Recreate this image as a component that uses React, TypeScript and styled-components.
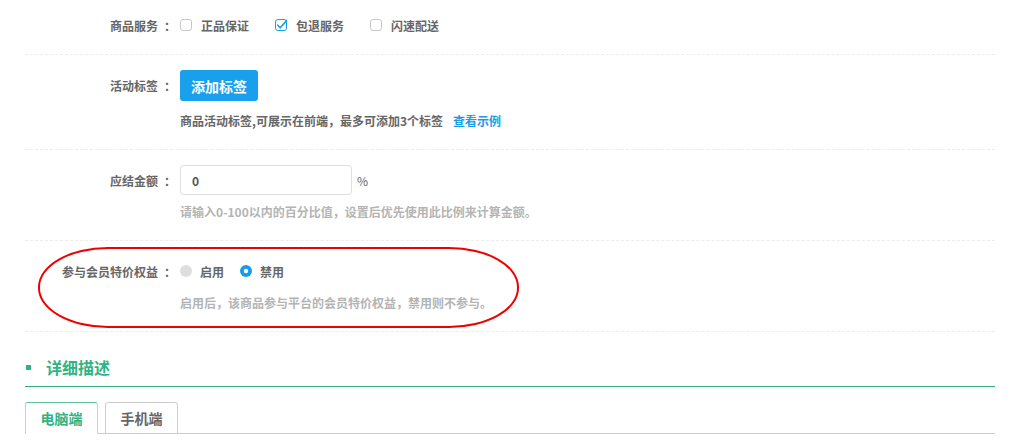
import styled, { createGlobalStyle } from "styled-components";

const GlobalStyle = createGlobalStyle`
    body {
        margin: 0;
        background: #ffffff;
        font-family: "Noto Sans CJK SC", "Liberation Sans", sans-serif;
        font-size: 12px;
        color: #666666;
    }
`

type CheckProps = {
    label: string
    checked?: boolean
}

const Check = (props: CheckProps) => {
    return (
        <Option>
            <svg width="13" height="13" viewBox="0 0 13 13">
                <rect x="0.5" y="0.5" width="11" height="11" rx="2.5" fill="#fff"
                      stroke={props.checked ? "#1a9be6" : "#c8c8c8"}/>
                {props.checked && (
                    <path d="M2.8 6.2 L5.2 8.8 L11.6 1.6" fill="none" stroke="#1a9be6"
                          strokeWidth="1.6" strokeLinecap="round" strokeLinejoin="round"/>
                )}
            </svg>
            {props.label}
        </Option>
    );
};

const Radio = (props: CheckProps) => {
    return (
        <Option>
            <svg width="12" height="12" viewBox="0 0 12 12">
                {props.checked ? (
                    <>
                        <circle cx="6" cy="6" r="6" fill="#1a9be6"/>
                        <circle cx="6" cy="6" r="2.2" fill="#fff"/>
                    </>
                ) : (
                    <circle cx="6" cy="6" r="6" fill="#dedede"/>
                )}
            </svg>
            {props.label}
        </Option>
    );
};

const FieldLabel = (props: { text: string }) => {
    return (
        <Label>
            {props.text}
            <Colon>：</Colon>
        </Label>
    );
};

export const App = () => {
    return (
        <Page>
            <GlobalStyle/>
            <Row $compact>
                <Line>
                    <FieldLabel text="商品服务"/>
                    <Options $gap={26}>
                        <Check label="正品保证"/>
                        <Check label="包退服务" checked/>
                        <Check label="闪速配送"/>
                    </Options>
                </Line>
            </Row>

            <Row>
                <Line>
                    <FieldLabel text="活动标签"/>
                    <Button>添加标签</Button>
                </Line>
                <Help $dark>
                    商品活动标签,可展示在前端，最多可添加3个标签
                    <Link href={"#"}>查看示例</Link>
                </Help>
            </Row>

            <Row>
                <Line>
                    <FieldLabel text="应结金额"/>
                    <Input defaultValue="0"/>
                    <Unit>%</Unit>
                </Line>
                <Help>请输入0-100以内的百分比值，设置后优先使用此比例来计算金额。</Help>
            </Row>

            <Row>
                <Mark/>
                <Line>
                    <FieldLabel text="参与会员特价权益"/>
                    <Options $gap={16}>
                        <Radio label="启用"/>
                        <Radio label="禁用" checked/>
                    </Options>
                </Line>
                <Help>启用后，该商品参与平台的会员特价权益，禁用则不参与。</Help>
            </Row>

            <SectionHead>
                <Bullet/>
                <SectionTitle>详细描述</SectionTitle>
            </SectionHead>

            <Tabs>
                <Tab $active>电脑端</Tab>
                <Tab>手机端</Tab>
            </Tabs>
        </Page>
    );
};

export default App;

const Page = styled.div`
    width: 970px;
    margin-left: 25px;
`

const Row = styled.div<{ $compact?: boolean }>`
    position: relative;
    padding: ${p => p.$compact ? "10px 0 14px" : "15px 0 19px"};
    border-bottom: 1px dashed #ececec;
`

const Line = styled.div`
    display: flex;
    align-items: center;
    min-height: 30px;
`

const Label = styled.div`
    width: 145px;
    margin-right: 10px;
    text-align: right;
    font-weight: 700;
    color: #666;
    white-space: nowrap;
`

// the CJK colon sits at the left of its box, nudge it to the middle
const Colon = styled.span`
    padding-left: 6px;
    margin-right: -6px;
`

const Options = styled.div<{ $gap: number }>`
    display: flex;
    align-items: center;
    gap: ${p => p.$gap}px;
`

const Option = styled.label`
    display: flex;
    align-items: center;
    gap: 8px;
    font-weight: 700;
    color: #666;

    svg {
        display: block;
        flex-shrink: 0;
    }
`

const Button = styled.button`
    width: 78px;
    height: 31px;
    border: none;
    border-radius: 3px;
    background: #19a0ec;
    color: #fff;
    font-family: inherit;
    font-size: 14px;
    font-weight: 700;
    padding: 0;
`

const Input = styled.input`
    box-sizing: border-box;
    width: 172px;
    height: 30px;
    border: 1px solid #e0e0e0;
    border-radius: 3px;
    padding: 0 11px;
    font-family: inherit;
    font-size: 12px;
    font-weight: 700;
    color: #555;
    outline: none;
`

const Unit = styled.span`
    margin-left: 5px;
    color: #666;
`

const Help = styled.div<{ $dark?: boolean }>`
    margin: ${p => p.$dark ? "11px" : "8px"} 0 0 155px;
    line-height: 18px;
    font-weight: 700;
    color: ${p => p.$dark ? "#666" : "#b4b4b4"};
`

const Link = styled.a`
    margin-left: 10px;
    color: #1a9be6;
    text-decoration: none;
`

// hand-drawn red ring around the member pricing row
const Mark = styled.div`
    position: absolute;
    left: 13px;
    top: 6px;
    width: 477px;
    height: 77px;
    border: 2px solid #ee0000;
    border-radius: 70px / 40px;
    pointer-events: none;
`

const SectionHead = styled.div`
    display: flex;
    align-items: center;
    height: 20px;
    padding: 25px 0 9px;
    border-bottom: 1px solid #36ad7f;
`

const Bullet = styled.span`
    width: 5px;
    height: 5px;
    margin: 0 15px 0 1px;
    background: #2fb383;
`

const SectionTitle = styled.h3`
    margin: 0;
    font-size: 16px;
    font-weight: 700;
    color: #2fb383;
`

const Tabs = styled.div`
    display: flex;
    gap: 7px;
    margin-top: 15px;
    border-bottom: 1px solid #cccccc;
`

const Tab = styled.div<{ $active?: boolean }>`
    box-sizing: border-box;
    width: 73px;
    height: 32px;
    margin-bottom: -1px;
    display: flex;
    align-items: center;
    justify-content: center;
    border: 1px solid #cccccc;
    border-top-color: ${p => p.$active ? "#5fc49c" : "#cccccc"};
    border-bottom-color: ${p => p.$active ? "#ffffff" : "#cccccc"};
    border-radius: 3px 3px 0 0;
    background: #fff;
    font-size: 14px;
    font-weight: 700;
    color: ${p => p.$active ? "#2fb383" : "#666"};
`
